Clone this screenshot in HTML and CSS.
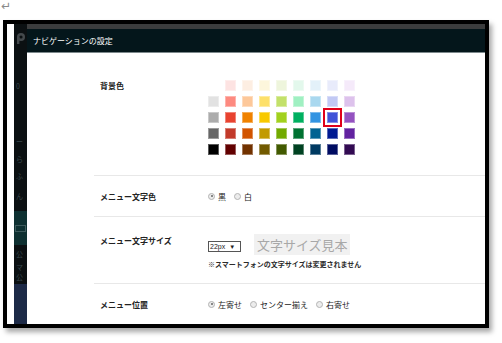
FILE: index.html
```html
<!DOCTYPE html>
<html lang="ja">
<head>
    <meta charset="UTF-8">
    <title>ナビゲーションの設定</title>
    <link rel="stylesheet" href="styles.css">
</head>
<body>
    <div class="mark">↵</div>
    <div class="frame">
        <div class="strip"></div>
        <div class="sidebar">
            <div class="side-logo">
                <svg width="10" height="11" viewBox="0 0 10 11">
                    <circle cx="5" cy="4" r="4" fill="#44494c"/>
                    <circle cx="5" cy="4" r="1.6" fill="#0b1012"/>
                    <rect x="1" y="4" width="2.4" height="7" fill="#44494c"/>
                </svg>
            </div>
            <div class="side-text t1">0</div>
            <div class="side-text t2">ー</div>
            <div class="side-text t3">ら</div>
            <div class="side-text t4">ふ</div>
            <div class="side-text t5">ん</div>
            <div class="side-teal"><span class="side-btn"></span></div>
            <div class="side-text t6">公</div>
            <div class="side-text t7">マ</div>
            <div class="side-text t8">公</div>
            <div class="side-blue"></div>
        </div>
        <div class="main">
            <div class="topband"></div>
            <div class="dlg-head">ナビゲーションの設定</div>
            <div class="dlg-body">
                <div class="row row-color">
                    <div class="label">背景色</div>
                    <div class="swatches">
                        <span class="sw empty"></span>
                        <span class="sw" style="background:#fde3e2"></span>
                        <span class="sw" style="background:#fdeee2"></span>
                        <span class="sw" style="background:#fdf6dc"></span>
                        <span class="sw" style="background:#eef5dc"></span>
                        <span class="sw" style="background:#e3f8ec"></span>
                        <span class="sw" style="background:#e3f1f9"></span>
                        <span class="sw" style="background:#e8ebfb"></span>
                        <span class="sw" style="background:#f5eafa"></span>

                        <span class="sw" style="background:#e2e2e2"></span>
                        <span class="sw" style="background:#fd8a80"></span>
                        <span class="sw" style="background:#fdc89a"></span>
                        <span class="sw" style="background:#fde06a"></span>
                        <span class="sw" style="background:#c3e16a"></span>
                        <span class="sw" style="background:#a0f0c2"></span>
                        <span class="sw" style="background:#a9d8ef"></span>
                        <span class="sw" style="background:#c2c9f4"></span>
                        <span class="sw" style="background:#ddc2ec"></span>

                        <span class="sw" style="background:#acacac"></span>
                        <span class="sw" style="background:#e84330"></span>
                        <span class="sw" style="background:#f08200"></span>
                        <span class="sw" style="background:#f8c900"></span>
                        <span class="sw" style="background:#a2d11e"></span>
                        <span class="sw" style="background:#00b060"></span>
                        <span class="sw" style="background:#3394e2"></span>
                        <span class="sw selected" style="background:#4052d8"></span>
                        <span class="sw" style="background:#9452c0"></span>

                        <span class="sw" style="background:#666666"></span>
                        <span class="sw" style="background:#c23a2a"></span>
                        <span class="sw" style="background:#d25400"></span>
                        <span class="sw" style="background:#c29a00"></span>
                        <span class="sw" style="background:#72aa00"></span>
                        <span class="sw" style="background:#007232"></span>
                        <span class="sw" style="background:#006292"></span>
                        <span class="sw" style="background:#001a92"></span>
                        <span class="sw" style="background:#6222a0"></span>

                        <span class="sw" style="background:#000000"></span>
                        <span class="sw" style="background:#620000"></span>
                        <span class="sw" style="background:#723200"></span>
                        <span class="sw" style="background:#725a00"></span>
                        <span class="sw" style="background:#425a00"></span>
                        <span class="sw" style="background:#004222"></span>
                        <span class="sw" style="background:#003a62"></span>
                        <span class="sw" style="background:#000c62"></span>
                        <span class="sw" style="background:#320a52"></span>
                    </div>
                </div>

                <div class="row row-text">
                    <div class="label">メニュー文字色</div>
                    <div class="radios">
                        <span class="radio checked"></span><span class="opt">黒</span>
                        <span class="radio"></span><span class="opt">白</span>
                    </div>
                </div>

                <div class="row row-size">
                    <div class="label">メニュー文字サイズ</div>
                    <div class="size-box">
                        <div class="size-line">
                            <span class="select">22px <b>▼</b></span>
                            <span class="sample">文字サイズ見本</span>
                        </div>
                        <div class="note">※スマートフォンの文字サイズは変更されません</div>
                    </div>
                </div>

                <div class="row row-pos">
                    <div class="label">メニュー位置</div>
                    <div class="radios">
                        <span class="radio checked"></span><span class="opt">左寄せ</span>
                        <span class="radio"></span><span class="opt">センター揃え</span>
                        <span class="radio"></span><span class="opt">右寄せ</span>
                    </div>
                </div>
            </div>
        </div>
    </div>
</body>
</html>
```

FILE: styles.css
```css
body {
  margin: 0;
  width: 502px;
  height: 343px;
  background: #fff;
  font-family: "Noto Sans CJK JP", "Noto Sans", sans-serif;
  overflow: hidden;
}

.mark {
  height: 20px;
  padding-left: 1px;
  font-size: 12px;
  line-height: 13px;
  color: #8a8a8a;
  font-family: "DejaVu Sans", sans-serif;
}

.frame {
  margin-left: 3px;
  width: 486px;
  height: 308px;
  box-sizing: border-box;
  border: 4px solid #000;
  box-shadow: 3px 4px 5px rgba(0, 0, 0, 0.35);
  display: flex;
}

.strip {
  width: 7px;
  background: #fff;
}

.sidebar {
  width: 13px;
  background: #0b1012;
  display: flex;
  flex-direction: column;
  overflow: hidden;
}
.side-logo {
  height: 15px;
  padding: 1px 0 0 2px;
}
.side-text {
  font-size: 7px;
  line-height: 8px;
  color: #39484c;
  padding-left: 2px;
}
.t1 { margin-top: 42px; }
.t2 { margin-top: 47px; }
.t3 { margin-top: 10px; }
.t4 { margin-top: 9px; }
.t5 { margin-top: 12px; }
.side-teal {
  margin-top: 11px;
  height: 34px;
  background: #0e3031;
  display: flex;
  align-items: center;
}
.side-btn {
  display: block;
  width: 9px;
  height: 5px;
  margin-left: 1px;
  border: 1px solid #3d5a5c;
}
.t6 { margin-top: 5px; }
.t7 { margin-top: 5px; }
.t8 { margin-top: 2px; }
.side-blue {
  margin-top: 3px;
  flex: 1;
  background: #1d2a47;
}

.main {
  flex: 1;
  display: flex;
  flex-direction: column;
}
.topband {
  height: 5px;
  background: #3b3c3d;
}
.dlg-head {
  height: 23px;
  background: #04161b;
  border-bottom: 1px solid #7d898c;
  color: #fff;
  font-size: 8px;
  line-height: 23px;
  padding-left: 6px;
}
.dlg-body {
  flex: 1;
  background: #fff;
  padding-left: 67px;
  overflow: hidden;
}

.row {
  display: grid;
  grid-template-columns: 108px 1fr;
  padding-left: 6px;
  border-bottom: 1px solid #e8e8e8;
  box-sizing: border-box;
}
.label {
  font-size: 8px;
  line-height: 11px;
  font-weight: bold;
  color: #222;
}

.row-color {
  height: 123px;
  padding-top: 27px;
  align-items: start;
}
.swatches {
  display: grid;
  grid-template-columns: repeat(9, 11px);
  grid-auto-rows: 11px;
  gap: 5px 6px;
}
.sw {
  display: block;
  box-shadow: inset 0 0 0 1px rgba(255, 255, 255, 0.35);
}
.sw.empty {
  background: #fff;
}
.sw.selected {
  outline: 2px solid #e0001a;
  outline-offset: 2px;
}

.row-text {
  height: 41px;
  align-items: center;
}
.radios {
  display: flex;
  align-items: center;
  font-size: 8px;
  color: #222;
}
.radio {
  width: 5px;
  height: 5px;
  border: 1px solid #b4b4b4;
  border-radius: 50%;
  background: #ececec;
  margin-right: 3px;
  position: relative;
}
.radio.checked::after {
  content: "";
  position: absolute;
  left: 1.5px;
  top: 1.5px;
  width: 2px;
  height: 2px;
  border-radius: 50%;
  background: #666;
}
.opt {
  margin-right: 8px;
}

.row-size {
  height: 67px;
  padding-top: 17px;
  align-items: start;
}
.row-size .label {
  padding-top: 1px;
}
.size-line {
  display: flex;
  align-items: center;
  height: 21px;
}
.select {
  width: 30px;
  height: 9px;
  border: 1px solid #555;
  font-size: 7px;
  line-height: 9px;
  padding-left: 1px;
  color: #222;
  font-family: "Liberation Sans", sans-serif;
  margin-top: 3px;
}
.select b {
  font-size: 6px;
  margin-left: 2px;
}
.sample {
  margin-left: 13px;
  height: 21px;
  padding: 0 2px 0 3px;
  background: #f1f1f1;
  color: #a8a8a8;
  font-size: 13px;
  line-height: 21px;
}
.note {
  margin-top: 5px;
  font-size: 7px;
  line-height: 9px;
  color: #2b2b2b;
  font-weight: 600;
}

.row-pos {
  height: 37px;
  padding-top: 3px;
  align-items: center;
  border-bottom: none;
}
```
